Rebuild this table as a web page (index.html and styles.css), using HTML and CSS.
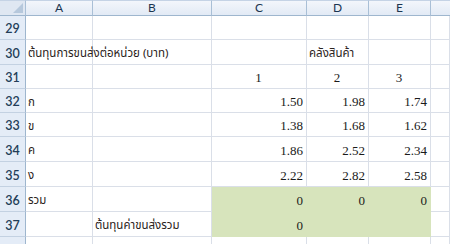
FILE: index.html
```html
<!DOCTYPE html>
<html lang="th">
<head>
<meta charset="utf-8">
<link rel="stylesheet" href="styles.css">
</head>
<body>
<div class="sheet">
  <div class="corner"><span class="tri"></span></div>
  <div class="ch">A</div>
  <div class="ch">B</div>
  <div class="ch">C</div>
  <div class="ch">D</div>
  <div class="ch">E</div>
  <div class="ch last"></div>

  <div class="rh">29</div>
  <div class="c"></div><div class="c"></div><div class="c"></div><div class="c"></div><div class="c"></div><div class="c"></div>

  <div class="rh">30</div>
  <div class="c th over">ต้นทุนการขนส่งต่อหน่วย (บาท)</div><div class="c"></div><div class="c"></div><div class="c th over">คลังสินค้า</div><div class="c"></div><div class="c"></div>

  <div class="rh">31</div>
  <div class="c"></div><div class="c"></div><div class="c num ctr">1</div><div class="c num ctr">2</div><div class="c num ctr">3</div><div class="c"></div>

  <div class="rh">32</div>
  <div class="c th">ก</div><div class="c"></div><div class="c num">1.50</div><div class="c num">1.98</div><div class="c num">1.74</div><div class="c"></div>

  <div class="rh">33</div>
  <div class="c th">ข</div><div class="c"></div><div class="c num">1.38</div><div class="c num">1.68</div><div class="c num">1.62</div><div class="c"></div>

  <div class="rh">34</div>
  <div class="c th">ค</div><div class="c"></div><div class="c num">1.86</div><div class="c num">2.52</div><div class="c num">2.34</div><div class="c"></div>

  <div class="rh">35</div>
  <div class="c th">ง</div><div class="c"></div><div class="c num">2.22</div><div class="c num">2.82</div><div class="c num">2.58</div><div class="c"></div>

  <div class="rh">36</div>
  <div class="c th">รวม</div><div class="c"></div><div class="c num fill">0</div><div class="c num fill">0</div><div class="c num fill">0</div><div class="c"></div>

  <div class="rh">37</div>
  <div class="c"></div><div class="c th">ต้นทุนค่าขนส่งรวม</div><div class="c num fill">0</div><div class="c fill"></div><div class="c fill"></div><div class="c"></div>

  <div class="rh"></div>
  <div class="c"></div><div class="c"></div><div class="c"></div><div class="c"></div><div class="c"></div><div class="c"></div>
</div>
</body>
</html>
```

FILE: styles.css
```css
html, body {
  margin: 0;
  padding: 0;
  background: #ffffff;
}

.sheet {
  display: grid;
  grid-template-columns: 26px 67px 119px 95px 62px 62px 1fr;
  grid-template-rows: 16px 24px 25px 24px 24px 24px 25px 25px 25px 25px 25px;
  width: 450px;
  height: 244px;
  overflow: hidden;
}

.corner,
.ch {
  box-sizing: border-box;
  background: linear-gradient(#f3f6fb, #e2eaf5);
  border-top: 1px solid #c5d3e5;
  border-right: 1px solid #a9bfd6;
  border-bottom: 1px solid #9eb6ce;
  font-family: Lato, "Liberation Sans", sans-serif;
  font-size: 12px;
  color: #1b3550;
  display: flex;
  align-items: center;
  justify-content: center;
  line-height: 1;
}

.ch.last {
  border-right: none;
}

.corner {
  position: relative;
  background: #dfe7f2;
}

.tri {
  position: absolute;
  right: 2px;
  bottom: 2px;
  width: 0;
  height: 0;
  border-left: 10px solid transparent;
  border-bottom: 10px solid #b6c8dc;
}

.rh {
  box-sizing: border-box;
  background: #e4ecf7;
  border-right: 1px solid #9eb6ce;
  border-bottom: 1px solid #c3d1e2;
  font-family: Lato, "Liberation Sans", sans-serif;
  font-size: 12.5px;
  font-weight: 600;
  color: #233d58;
  display: flex;
  align-items: center;
  justify-content: center;
  padding-top: 2px;
}

.c {
  box-sizing: border-box;
  border-right: 1px solid #dadfe8;
  border-bottom: 1px solid #dadfe8;
  display: flex;
  align-items: center;
  padding: 3px 3px 0 2px;
  white-space: nowrap;
  min-width: 0;
  color: #1a1a1a;
}

.th {
  font-family: Tahoma, "Noto Sans Thai", "Noto Sans", "DejaVu Sans", sans-serif;
  font-size: 11.5px;
  color: #2a2220;
}

.over {
  overflow: visible;
  position: relative;
  z-index: 1;
}

.num {
  font-family: "Liberation Serif", serif;
  font-size: 13px;
  justify-content: flex-end;
}

.num.ctr {
  justify-content: center;
}

.fill {
  background: #d7e4bc;
  border-color: #d7e4bc;
}
```
